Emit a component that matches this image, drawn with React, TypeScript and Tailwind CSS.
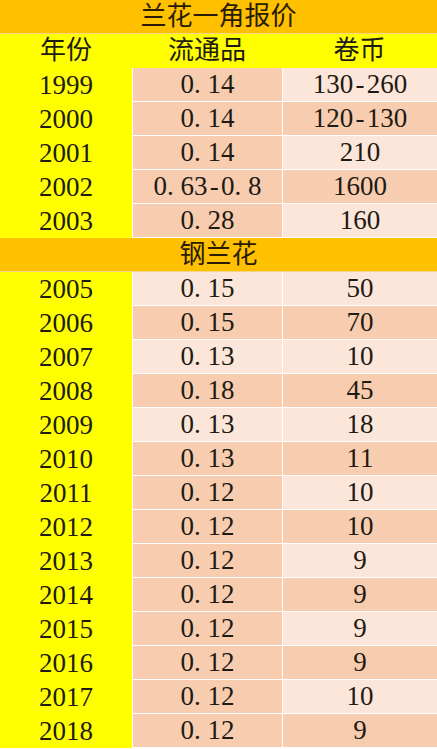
const P = 'bg-[#f8ccae]';
const L = 'bg-[#fce6d9]';

type Row = { year: string; a: string; b: string; ca: string; cb: string };

const part1: Row[] = [
  { year: '1999', a: '0.14', b: '130-260', ca: P, cb: L },
  { year: '2000', a: '0.14', b: '120-130', ca: P, cb: P },
  { year: '2001', a: '0.14', b: '210', ca: P, cb: L },
  { year: '2002', a: '0.63-0.8', b: '1600', ca: P, cb: P },
  { year: '2003', a: '0.28', b: '160', ca: P, cb: L },
];

const part2: Row[] = [
  { year: '2005', a: '0.15', b: '50', ca: L, cb: L },
  { year: '2006', a: '0.15', b: '70', ca: P, cb: P },
  { year: '2007', a: '0.13', b: '10', ca: L, cb: L },
  { year: '2008', a: '0.18', b: '45', ca: P, cb: P },
  { year: '2009', a: '0.13', b: '18', ca: L, cb: L },
  { year: '2010', a: '0.13', b: '11', ca: P, cb: P },
  { year: '2011', a: '0.12', b: '10', ca: P, cb: L },
  { year: '2012', a: '0.12', b: '10', ca: P, cb: P },
  { year: '2013', a: '0.12', b: '9', ca: P, cb: L },
  { year: '2014', a: '0.12', b: '9', ca: P, cb: P },
  { year: '2015', a: '0.12', b: '9', ca: P, cb: L },
  { year: '2016', a: '0.12', b: '9', ca: P, cb: P },
  { year: '2017', a: '0.12', b: '10', ca: P, cb: L },
  { year: '2018', a: '0.12', b: '9', ca: P, cb: P },
];

// 宋体-style: periods and hyphens take half an em
function Num({ text }: { text: string }) {
  return (
    <span className="inline-flex">
      {text.split('').map((ch, i) =>
        ch === '.' ? (
          <span key={i} className="inline-block w-[0.5em] text-left">.</span>
        ) : ch === '-' ? (
          <span key={i} className="inline-block w-[0.5em] text-center">-</span>
        ) : (
          <span key={i}>{ch}</span>
        )
      )}
    </span>
  );
}

function Section({ title }: { title: string }) {
  return (
    <div className="h-[34px] bg-[#ffc000] flex items-center justify-center text-[26px] text-[#2a1c00] border-b border-[#f3d58a]">
      {title}
    </div>
  );
}

function DataRow({ r }: { r: Row }) {
  return (
    <div className="h-[34px] flex">
      <div className="w-[132px] bg-[#ffff00] flex items-center justify-center">{r.year}</div>
      <div className={`w-[150px] ${r.ca} flex items-center justify-center border-l border-b border-white`}>
        <Num text={r.a} />
      </div>
      <div className={`flex-1 ${r.cb} flex items-center justify-center border-l border-b border-white`}>
        <Num text={r.b} />
      </div>
    </div>
  );
}

export default function App() {
  return (
    <div
      className="w-[437px] h-[749px] bg-white overflow-hidden text-[27px] leading-none text-[#1e1a14]"
      style={{ fontFamily: '"Liberation Serif", "Noto Sans CJK SC", serif' }}
    >
      <Section title="兰花一角报价" />
      <div className="h-[34px] flex bg-[#ffff00] text-[26px]">
        <div className="w-[132px] flex items-center justify-center">年份</div>
        <div className="w-[150px] flex items-center justify-center">流通品</div>
        <div className="flex-1 flex items-center justify-center">卷币</div>
      </div>
      {part1.map((r) => (
        <DataRow key={r.year} r={r} />
      ))}
      <Section title="钢兰花" />
      {part2.map((r) => (
        <DataRow key={r.year} r={r} />
      ))}
    </div>
  );
}
